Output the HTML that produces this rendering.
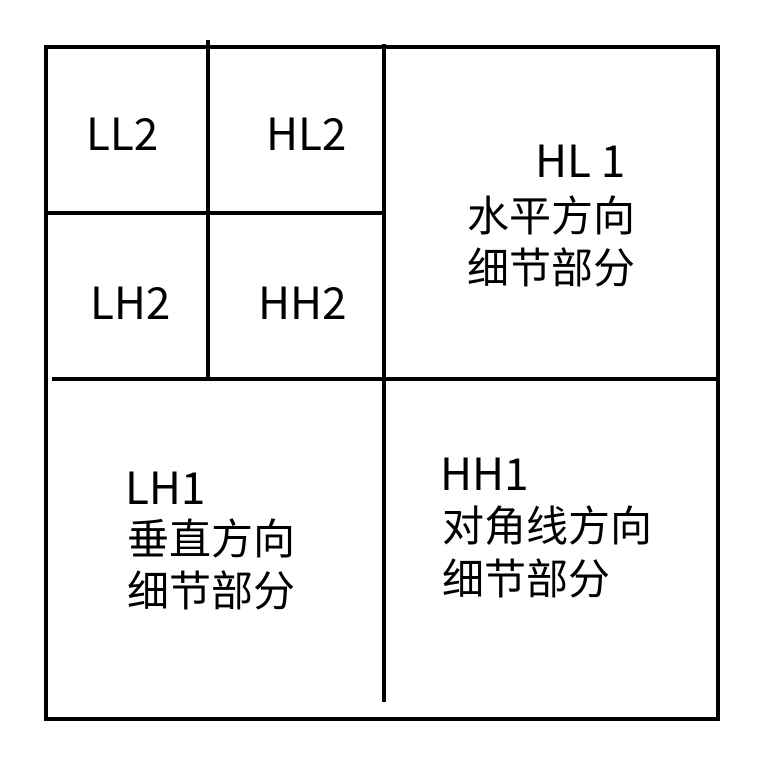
<!DOCTYPE html>
<html><head><meta charset="utf-8"><style>
html,body{margin:0;padding:0;background:#fff;width:782px;height:768px;overflow:hidden}
.l{position:absolute;background:#000}
.t{position:absolute;white-space:nowrap;color:#000;font-family:"Noto Sans CJK SC",sans-serif}
.e{font-size:44px;line-height:44px}
.c{font-size:42px;line-height:42px}
</style></head><body>
<div class="l" style="left:45px;top:45px;width:675px;height:4px"></div>
<div class="l" style="left:44px;top:45px;width:4px;height:676px"></div>
<div class="l" style="left:716px;top:45px;width:4px;height:676px"></div>
<div class="l" style="left:44px;top:717px;width:676px;height:4px"></div>
<div class="l" style="left:206px;top:40px;width:4px;height:339px"></div>
<div class="l" style="left:382px;top:44px;width:4px;height:658px"></div>
<div class="l" style="left:47px;top:211px;width:337px;height:4px"></div>
<div class="l" style="left:52px;top:377px;width:666px;height:4px"></div>

<div class="t e" style="left:86px;top:109px">LL2</div>
<div class="t e" style="left:266px;top:109px">HL2</div>
<div class="t e" style="left:90px;top:278px">LH2</div>
<div class="t e" style="left:258px;top:278px">HH2</div>

<div class="t e" style="left:535px;top:136px">HL 1</div>
<div class="t c" style="left:467px;top:193px">水平方向</div>
<div class="t c" style="left:467px;top:245px">细节部分</div>

<div class="t e" style="left:125px;top:463px">LH1</div>
<div class="t c" style="left:127px;top:516px">垂直方向</div>
<div class="t c" style="left:127px;top:568px">细节部分</div>

<div class="t e" style="left:440px;top:449px">HH1</div>
<div class="t c" style="left:442px;top:503px">对角线方向</div>
<div class="t c" style="left:442px;top:556px">细节部分</div>
</body></html>
